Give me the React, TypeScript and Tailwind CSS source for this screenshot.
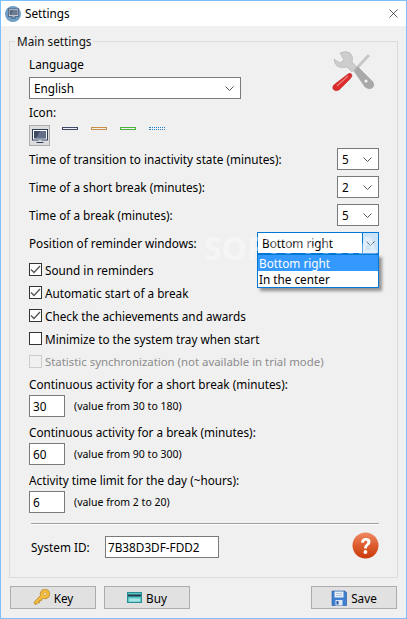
import { X } from "lucide-react";

const font = { fontFamily: '"Noto Sans", Tahoma, sans-serif' };

function Chevron() {
  return (
    <svg width="9" height="5" viewBox="0 0 9 5" fill="none" stroke="#555" strokeWidth="1">
      <path d="M0.5 0.5 L4.5 4.5 L8.5 0.5" />
    </svg>
  );
}

function Combo({ value, className }: { value: string; className: string }) {
  return (
    <div className={`flex h-[22px] items-center justify-between border border-[#7a7a7a] bg-white pl-[4px] pr-[6px] ${className}`}>
      <span>{value}</span>
      <Chevron />
    </div>
  );
}

function SpinRow({ label, value }: { label: string; value: string }) {
  return (
    <div className="flex h-[22px] items-center justify-between">
      <span>{label}</span>
      <Combo value={value} className="w-[42px]" />
    </div>
  );
}

function Check({ label, checked, disabled }: { label: string; checked?: boolean; disabled?: boolean }) {
  return (
    <div className={`flex h-[23px] items-center gap-[3px] ${disabled ? "text-[11.4px] text-[#8c8c8c]" : ""}`}>
      <span className={`flex h-[13px] w-[13px] items-center justify-center border ${disabled ? "border-[#cccccc] bg-[#f0f0f0]" : "border-[#333333] bg-white"}`}>
        {checked && (
          <svg width="11" height="9" viewBox="0 0 11 9" fill="none" stroke="#555" strokeWidth="1.3">
            <path d="M1 4.5 L4 7.5 L10 1" />
          </svg>
        )}
      </span>
      <span>{label}</span>
    </div>
  );
}

function NumberRow({ label, value, hint }: { label: string; value: string; hint: string }) {
  return (
    <div>
      <div className="h-[17px] leading-[17px]">{label}</div>
      <div className="mt-[2px] flex items-center gap-[9px]">
        <div className="flex h-[22px] w-[36px] items-center border border-[#7a7a7a] bg-white pl-[3px]">{value}</div>
        <span className="text-[10.5px]">{hint}</span>
      </div>
    </div>
  );
}

function Btn({ icon, label, className }: { icon: React.ReactNode; label: string; className?: string }) {
  return (
    <div className={`flex h-[23px] w-[86px] items-center justify-center gap-[4px] border border-[#adadad] bg-[#e1e1e1] ${className ?? ""}`}>
      {icon}
      <span>{label}</span>
    </div>
  );
}

function Monitor({ size = 16, glow }: { size?: number; glow?: boolean }) {
  return (
    <svg width={size} height={size} viewBox="0 0 16 16">
      <rect x="0.5" y="1.5" width="15" height="10.5" fill="#fff" stroke="#2f3f5a" />
      <rect x="2" y="3" width="12" height="7.5" fill={glow ? "#54657f" : "#3c4a63"} />
      <path d="M8 3 H14 V10.5 H4 Z" fill="#7d8ba1" opacity="0.6" />
      <rect x="6.5" y="12" width="3" height="1.5" fill="#cfd6e0" />
      <rect x="4.5" y="14" width="7" height="1" fill="#2f3f5a" />
    </svg>
  );
}

function Tools() {
  return (
    <svg width="44" height="44" viewBox="0 0 44 44">
      {/* screwdriver */}
      <path d="M36 4 L38 6 L25 20 L23 18 Z" fill="#c6c6c6" />
      <path d="M22 21 L26 17 L41 32 Q43 36 40 38 Q37 40 33 37 Z" fill="#a9a9a9" stroke="#989898" strokeWidth="0.5" />
      <circle cx="34" cy="31" r="1.6" fill="#f2f2f2" />
      {/* wrench */}
      <path d="M2 9 L8 13 L12 10 L8 3 Q14 0 18 3 Q22 7 20 12 L25 17 L20 22 L15 17 Q9 19 5 16 Q2 13 2 9 Z" fill="#cdcdcd" stroke="#b0b0b0" strokeWidth="0.6" />
      <path d="M16 24 Q19 22 20 25 Q20 27 18 29 L7 40 Q3 42 1 39 Q0 36 3 34 Z" fill="#dc2b2b" stroke="#b31e1e" strokeWidth="0.5" />
      <path d="M16 26 L5 36" stroke="#f08080" strokeWidth="1.2" fill="none" />
    </svg>
  );
}

function Help() {
  return (
    <svg width="27" height="27" viewBox="0 0 27 27">
      <defs>
        <linearGradient id="helpFill" x1="0" y1="0" x2="0" y2="1">
          <stop offset="0" stopColor="#ee8a63" />
          <stop offset="0.5" stopColor="#dd5b2e" />
          <stop offset="1" stopColor="#c93a0b" />
        </linearGradient>
      </defs>
      <circle cx="13.5" cy="13.5" r="13" fill="url(#helpFill)" />
      <path d="M9 10.5 Q9.5 6 13.8 6 Q18.5 6 18.5 10 Q18.5 12.5 16 14 Q14.8 14.8 14.8 16.5 H12 Q12 13.6 14 12.3 Q15.4 11.4 15.4 10.2 Q15.4 8.6 13.7 8.6 Q12.2 8.6 11.9 10.7 Z" fill="#fff" />
      <circle cx="13.4" cy="20" r="1.9" fill="#fff" />
    </svg>
  );
}

function KeyIcon() {
  return (
    <svg width="17" height="17" viewBox="0 0 16 16">
      <path d="M2 14.5 L1 12.5 L7 6 A4.5 4.5 0 1 1 10 9 L8 9.5 L8 11 L6 11 L6 13 L4 13 L3 14.5 Z" fill="#f0bb3e" stroke="#b9862a" strokeWidth="0.8" />
      <circle cx="11.2" cy="4.6" r="1.3" fill="#fff4c8" stroke="#b9862a" strokeWidth="0.5" />
    </svg>
  );
}

function CardIcon() {
  return (
    <svg width="15" height="11" viewBox="0 0 15 11">
      <rect x="0.5" y="0.5" width="14" height="10" fill="#53c4c4" stroke="#2c8f96" />
      <rect x="1" y="2.5" width="13" height="2" fill="#23384a" />
      <rect x="2" y="6.5" width="11" height="3" fill="#a7e6e4" />
    </svg>
  );
}

function SaveIcon() {
  return (
    <svg width="16" height="16" viewBox="0 0 16 16">
      <path d="M1 1 H14 L15.5 2.5 V15.5 H1 Z" fill="#3d7fd0" stroke="#25589e" strokeWidth="0.6" />
      <rect x="3.5" y="1.5" width="9" height="6" fill="#e8eef6" />
      <path d="M5 3.5 H11 M5 5.5 H11" stroke="#a9bdd7" strokeWidth="0.8" />
      <rect x="4.5" y="10" width="7" height="5.5" fill="#dfe7f2" />
      <rect x="5.5" y="11" width="2" height="3.5" fill="#25589e" />
    </svg>
  );
}

export default function App() {
  return (
    <div
      className="relative flex h-[619px] w-[407px] flex-col overflow-hidden border border-[#7cc0fa] bg-[#f0f0f0] text-[11.75px] leading-[16px] text-black"
      style={font}
    >
      <div className="flex h-[25px] shrink-0 items-center justify-between bg-white pl-[4px] pr-[3px]">
        <div className="flex items-center gap-[4px]">
          <div className="flex h-[16px] w-[16px] items-center justify-center rounded-full bg-[#6f9dc4]">
            <Monitor size={11} glow />
          </div>
          <span className="mb-[2px]">Settings</span>
        </div>
        <X size={15} strokeWidth={1} className="mr-[2px]" />
      </div>

      <fieldset className="mx-[8px] mt-[7px] h-[545px] border border-[#dcdcdc] pb-0 pl-[19px] pr-[18px]">
        <legend className="ml-[-14px] px-[2px] text-[#111]">Main settings</legend>

        <div className="relative mt-[7px] leading-[16px]">
          <div>Language</div>
          <Combo value="English" className="mt-[5px] w-[212px]" />
          <div className="absolute right-[3px] top-[-6px]">
            <Tools />
          </div>
        </div>

        <div className="mt-[5px]">Icon:</div>
        <div className="mt-[5px] flex items-start">
          <div className="flex h-[21px] w-[21px] items-center justify-center border border-[#adadad] bg-[#dcdcdc]">
            <Monitor />
          </div>
          <div className="ml-[12px] mt-[2px] h-[3px] w-[16px] border border-[#3e4a66]" />
          <div className="ml-[13px] mt-[2px] h-[3px] w-[16px] border border-[#c98f4a]" />
          <div className="ml-[13px] mt-[2px] h-[3px] w-[16px] border border-[#4caf3e]" />
          <div className="ml-[13px] mt-[2px] h-[3px] w-[16px] border-b border-dotted border-b-[#1f7fc9] border-t border-t-[#1f7fc9]" />
        </div>

        <div className="mt-[2px] flex flex-col gap-[6px]">
          <SpinRow label="Time of transition to inactivity state (minutes):" value="5" />
          <SpinRow label="Time of a short break (minutes):" value="2" />
          <SpinRow label="Time of a break (minutes):" value="5" />
          <div className="relative flex h-[22px] items-center justify-between">
            <span>Position of reminder windows:</span>
            <div className="flex h-[22px] w-[122px] items-stretch border border-[#0078d7] bg-white">
              <span className="flex-1 pl-[4px] leading-[20px]">Bottom right</span>
              <span className="flex w-[16px] items-center justify-center border-l border-[#0078d7] bg-[#cce4f7]">
                <Chevron />
              </span>
            </div>
            <div className="absolute right-0 top-[22px] z-20 w-[122px] border border-[#0078d7] bg-white shadow-[3px_3px_3px_rgba(0,0,0,0.4)]">
              <div className="h-[16px] bg-[#3399ff] pl-[1px] text-white">Bottom right</div>
              <div className="h-[16px] pl-[1px]">In the center</div>
            </div>
          </div>
        </div>

        <div className="mt-[4px]">
          <Check label="Sound in reminders" checked />
          <Check label="Automatic start of a break" checked />
          <Check label="Check the achievements and awards" checked />
          <Check label="Minimize to the system tray when start" />
          <Check label="Statistic synchronization (not available in trial mode)" disabled />
        </div>

        <div className="mt-[3px] flex flex-col gap-[7px]">
          <NumberRow label="Continuous activity for a short break (minutes):" value="30" hint="(value from 30 to 180)" />
          <NumberRow label="Continuous activity for a break (minutes):" value="60" hint="(value from 90 to 300)" />
          <NumberRow label="Activity time limit for the day (~hours):" value="6" hint="(value from 2 to 20)" />
        </div>

        <div className="ml-[2px] mt-[10px] h-[2px] border-t border-[#a0a0a0] bg-white" />

        <div className="mt-[8px] flex h-[27px] items-center">
          <span className="ml-[2px] w-[74px]">System ID:</span>
          <div className="flex h-[22px] w-[114px] items-center border border-[#7a7a7a] bg-white pl-[2px]">7B38D3DF-FDD2</div>
          <div className="mb-[2px] ml-auto">
            <Help />
          </div>
        </div>
      </fieldset>

      <div className="mx-[9px] mt-[8px] flex gap-[8px]">
        <Btn icon={<KeyIcon />} label="Key" />
        <Btn icon={<CardIcon />} label="Buy" />
        <Btn icon={<SaveIcon />} label="Save" className="ml-auto" />
      </div>

      <div className="pointer-events-none absolute left-[203px] top-[228px] z-10 text-[32px] font-bold leading-[38px] text-white/40">
        SOFTPEDIA
      </div>
    </div>
  );
}
